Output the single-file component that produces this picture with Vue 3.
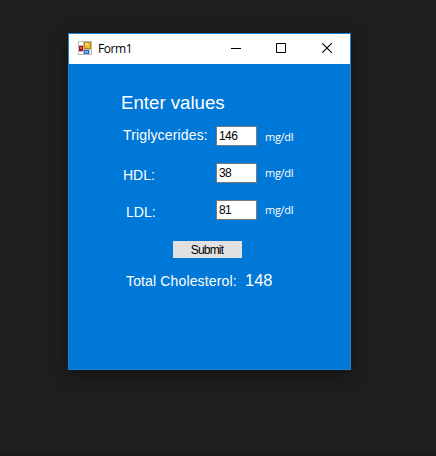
<script setup>
import { ref } from 'vue'

const fields = ref([
  { name: 'triglycerides', label: 'Triglycerides:', value: '146' },
  { name: 'hdl', label: 'HDL:', value: '38' },
  { name: 'ldl', label: 'LDL:', value: '81' },
])
const total = ref('148')
</script>

<template>
  <main class="desktop">
    <section class="window">
      <header class="titlebar">
        <svg class="app-icon" width="14" height="14" viewBox="0 0 14 14" shape-rendering="crispEdges">
          <rect width="14" height="14" fill="#bcbcbc" />
          <path d="M1 1h4v3h-4zM1 11h4v2h-4zM12 9h1v4h-1z" fill="#fff" />
          <rect x="6" y="1" width="7" height="7" fill="#b8860b" />
          <rect x="7" y="2" width="5" height="5" fill="#f5c02c" />
          <rect x="7" y="2" width="3" height="2" fill="#ffe27a" />
          <rect x="1" y="5" width="4" height="5" fill="#a30f0f" />
          <rect x="2" y="6" width="2" height="2" fill="#e8604c" />
          <rect x="6" y="9" width="5" height="4" fill="#2f66c8" />
          <rect x="7" y="10" width="3" height="2" fill="#7fb0f4" />
        </svg>
        <span class="title">Form1</span>
        <div class="controls">
          <svg width="10" height="10" viewBox="0 0 10 10"><path d="M0 5.5h10" stroke="#000" /></svg>
          <svg width="10" height="10" viewBox="0 0 10 10"><path d="M.5.5h9v9h-9z" fill="none" stroke="#000" /></svg>
          <svg class="close" width="10" height="10" viewBox="0 0 10 10"><path d="M.2.2l9.6 9.6M9.8.2l-9.6 9.6" fill="none" stroke="#000" stroke-width="1.1" /></svg>
        </div>
      </header>
      <form class="body" @submit.prevent>
        <h1>Enter values</h1>
        <div v-for="f in fields" :key="f.name" class="row" :class="f.name">
          <label :for="f.name">{{ f.label }}</label>
          <input :id="f.name" v-model="f.value" type="text" />
          <span class="unit">mg/dl</span>
        </div>
        <button type="submit">Submit</button>
        <p class="result">
          <span class="caption">Total Cholesterol:</span>
          <span class="total">{{ total }}</span>
        </p>
      </form>
    </section>
  </main>
</template>

<style>
body { margin: 0; background: #1e1e1e; }
</style>

<style scoped>
* { box-sizing: border-box; }
.desktop {
  height: 456px;
  padding: 33px 0 0 68px;
  background: #1e1e1e;
  border-bottom: 2px solid #1a191b;
  font-family: "Liberation Sans", Arial, sans-serif;
  overflow: hidden;
}
.window {
  width: 283px;
  height: 337px;
  border: 1px solid #1883d7;
  background: #0078d7;
  box-shadow: 0 4px 15px rgba(0, 0, 0, .38);
}
.titlebar {
  display: flex;
  align-items: center;
  height: 30px;
  padding: 0 18px 0 9px;
  background: #fff;
}
.app-icon { margin-bottom: 2px; }
.title {
  margin-left: 6px;
  font: 12px/16px "Open Sans", sans-serif;
  letter-spacing: -.4px;
  color: #000;
}
.controls {
  display: flex;
  gap: 35px;
  margin-left: auto;
  padding-bottom: 2px;
}
.controls svg { display: block; }
.controls .close { margin-left: 1px; }
.body {
  display: flex;
  flex-direction: column;
  align-items: flex-start;
  padding-top: 27px;
  color: #fff;
}
h1 {
  margin: 0 0 11px 52px;
  font-size: 18.67px;
  font-weight: 400;
  line-height: 24px;
  height: 24px;
}
.row {
  display: grid;
  grid-template-columns: 93px 41px auto;
  height: 20px;
  margin: 0 0 17px 54px;
}
label {
  padding-top: 3px;
  font-size: 14px;
  line-height: 18px;
  white-space: nowrap;
}
.triglycerides label { padding-top: 0; letter-spacing: .15px; }
.ldl label { padding-left: 3px; }
input {
  width: 41px;
  height: 20px;
  padding: 0 0 1px 2px;
  border: 1px solid #7a7a7a;
  border-radius: 0;
  outline: 0;
  background: #fff;
  color: #000;
  font: 12px/17px "Liberation Sans", Arial, sans-serif;
  letter-spacing: -.6px;
}
.unit {
  margin-left: 8px;
  font: 11px/20px "Open Sans", sans-serif;
  letter-spacing: -.3px;
}
.triglycerides .unit { padding-top: 1px; }
button {
  width: 69px;
  height: 17px;
  margin: 4px 0 0 104px;
  padding: 2px 1px 0 0;
  border: 0;
  background: #e1e1e1;
  color: #000;
  font: 12px/15px "Liberation Sans", Arial, sans-serif;
  letter-spacing: -.8px;
}
.result {
  display: flex;
  align-items: baseline;
  margin: 12px 0 0 57px;
  line-height: 20px;
}
.caption { width: 119px; font-size: 14px; letter-spacing: .14px; white-space: nowrap; }
.total { font-size: 16.5px; }
</style>
